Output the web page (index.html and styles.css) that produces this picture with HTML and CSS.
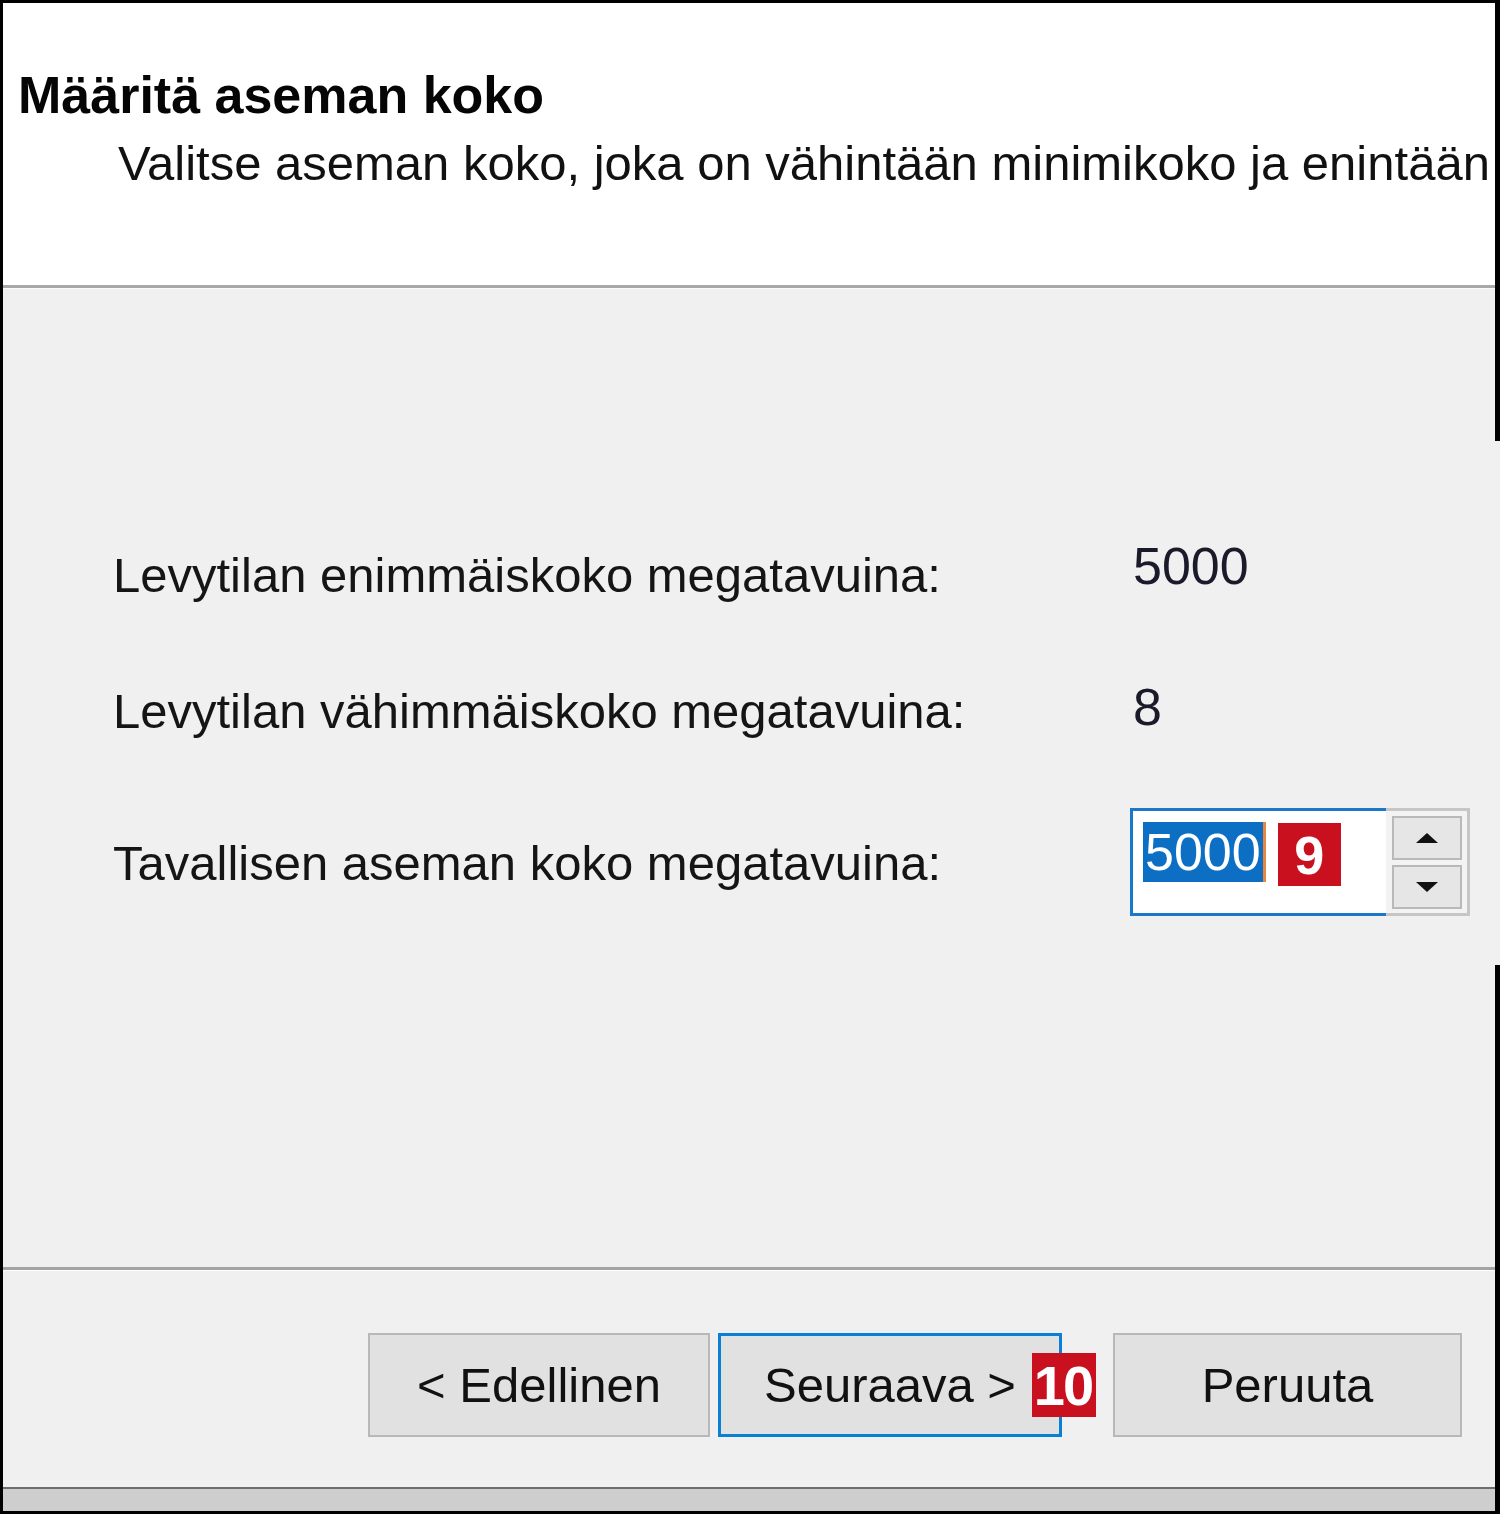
FILE: index.html
```html
<!DOCTYPE html>
<html lang="fi">
<head>
<meta charset="utf-8">
<title>Määritä aseman koko</title>
<link rel="stylesheet" href="styles.css">
</head>
<body>
<div class="window">
  <div class="main">
    <div class="header">
      <div class="title">Määritä aseman koko</div>
      <div class="subtitle">Valitse aseman koko, joka on vähintään minimikoko ja enintään</div>
    </div>
    <div class="body">
      <div class="row row1">
        <div class="label">Levytilan enimmäiskoko megatavuina:</div>
        <div class="value">5000</div>
      </div>
      <div class="row row2">
        <div class="label">Levytilan vähimmäiskoko megatavuina:</div>
        <div class="value">8</div>
      </div>
      <div class="row row3">
        <div class="label">Tavallisen aseman koko megatavuina:</div>
        <div class="spinbox">
          <div class="spin-input">
            <span class="sel">5000</span><span class="caret"></span><span class="badge badge9">9</span>
          </div>
          <div class="spin-buttons">
            <div class="spin-btn"><svg width="24" height="12" viewBox="0 0 24 12"><polygon points="12,1 23,11 1,11" fill="#111"/></svg></div>
            <div class="spin-btn"><svg width="24" height="12" viewBox="0 0 24 12"><polygon points="1,1 23,1 12,11" fill="#111"/></svg></div>
          </div>
        </div>
      </div>
    </div>
    <div class="footer">
      <div class="btn btn-back">&lt; Edellinen</div>
      <div class="btn btn-next">Seuraava &gt;</div>
      <div class="badge badge10">10</div>
      <div class="btn btn-cancel">Peruuta</div>
    </div>
    <div class="status"></div>
  </div>
  <div class="edge"></div>
</div>
</body>
</html>
```

FILE: styles.css
```css
html, body {
  margin: 0;
  padding: 0;
  background: #ffffff;
}

body {
  font-family: "Liberation Sans", Arial, sans-serif;
  color: #111;
}

.window {
  display: flex;
  width: 1500px;
  height: 1514px;
  box-sizing: border-box;
  border-top: 3px solid #000;
  border-left: 3px solid #000;
  border-bottom: 3px solid #000;
  background: #f0f0f0;
  overflow: hidden;
}

.main {
  flex: 1;
  min-width: 0;
  display: flex;
  flex-direction: column;
}

.edge {
  width: 5px;
  flex: none;
  background: linear-gradient(to bottom, #000 0, #000 438px, #f0f0f0 438px, #f0f0f0 962px, #000 962px, #000 100%);
}

/* Header */
.header {
  height: 285px;
  flex: none;
  box-sizing: border-box;
  background: #fff;
  border-bottom: 3px solid #a8a8a8;
  padding: 62px 0 0 15px;
  overflow: hidden;
}

.title {
  font-weight: bold;
  font-size: 52px;
  line-height: 60px;
  color: #050505;
  white-space: nowrap;
}

.subtitle {
  margin: 10px 0 0 100px;
  font-size: 49px;
  line-height: 56px;
  white-space: nowrap;
  color: #111;
}

/* Body */
.body {
  flex: 1;
  box-sizing: border-box;
  border-top: 1px solid #fafafa;
  padding: 249px 0 0 110px;
}

.row {
  display: grid;
  grid-template-columns: 1020px auto;
  align-items: start;
}

.row2 { margin-top: 76px; }
.row3 { margin-top: 69px; }

.label {
  font-size: 49px;
  line-height: 56px;
  white-space: nowrap;
  color: #151515;
}

.row1 .label { padding-top: 9px; }
.row2 .label { padding-top: 4px; }
.row3 .label { padding-top: 27px; }

.value {
  font-size: 52px;
  line-height: 56px;
  color: #1a1a2a;
}

/* Spin box */
.spinbox {
  margin-left: -3px;
  width: 340px;
  height: 108px;
  display: flex;
}

.spin-input {
  width: 256px;
  box-sizing: border-box;
  background: #fff;
  border: 3px solid #1a78c8;
  border-right: none;
  padding: 11px 0 0 10px;
  display: flex;
  align-items: flex-start;
}

.sel {
  background: #0d6fc4;
  color: #fff;
  font-size: 52px;
  line-height: 60px;
  padding: 0 2px;
}

.caret {
  width: 3px;
  height: 60px;
  background: #e8873a;
}

.badge {
  background: #c8101f;
  color: #fff;
  font-weight: bold;
  display: flex;
  align-items: center;
  justify-content: center;
  flex: none;
}

.badge9 {
  width: 63px;
  height: 63px;
  margin: 1px 0 0 12px;
  font-size: 54px;
}

.spin-buttons {
  width: 84px;
  box-sizing: border-box;
  background: #f3f3f3;
  border: 3px solid #c6c6c6;
  border-left: none;
  padding: 5px 5px 4px 6px;
  display: flex;
  flex-direction: column;
  gap: 5px;
}

.spin-btn {
  flex: 1;
  box-sizing: border-box;
  background: #e6e6e6;
  border: 2px solid #b9b9b9;
  display: flex;
  align-items: center;
  justify-content: center;
}

/* Footer */
.footer {
  height: 220px;
  flex: none;
  box-sizing: border-box;
  border-top: 3px solid #a4a4a4;
  box-shadow: inset 0 1px 0 #ffffff;
  padding: 63px 0 0 365px;
  display: flex;
  align-items: flex-start;
}

.btn {
  height: 104px;
  box-sizing: border-box;
  background: #e1e1e1;
  border: 2px solid #b8b8b8;
  display: flex;
  align-items: center;
  justify-content: center;
  font-size: 49px;
  color: #111;
  white-space: nowrap;
  flex: none;
}

.btn-back { width: 342px; }

.btn-next {
  width: 344px;
  margin-left: 8px;
  border: 3px solid #0a7fd6;
}

.badge10 {
  width: 64px;
  height: 64px;
  margin: 20px 0 0 -30px;
  font-size: 56px;
  letter-spacing: -2px;
  padding-right: 2px;
  box-sizing: border-box;
}

.btn-cancel {
  width: 349px;
  margin-left: 17px;
}

.status {
  height: 24px;
  flex: none;
  box-sizing: border-box;
  border-top: 2px solid #6e6e6e;
  background: #cecece;
}
```
